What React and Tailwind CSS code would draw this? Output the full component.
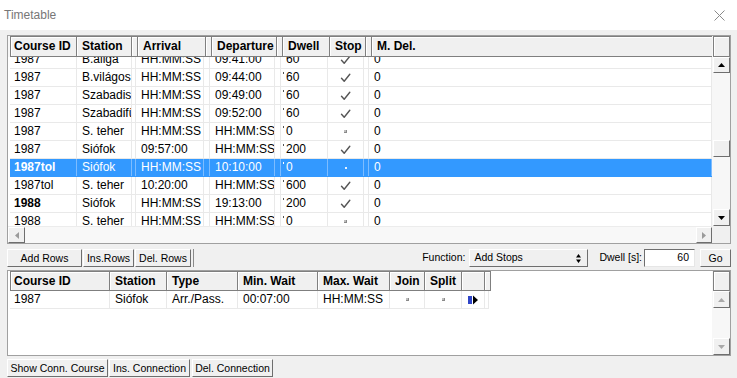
import React from 'react';

const topCols = [
  { w: 'w-[67px]', label: 'Course ID', first: true },
  { w: 'w-[55px]', label: 'Station' },
  { w: 'w-[4px]', hidden: true },
  { w: 'w-[68px]', label: 'Arrival' },
  { w: 'w-[6px]', hidden: true },
  { w: 'w-[65px]', label: 'Departure' },
  { w: 'w-[6px]', hidden: true },
  { w: 'w-[47px]', label: 'Dwell', tick: true },
  { w: 'w-[36px]', label: 'Stop', center: true },
  { w: 'w-[5px]', hidden: true },
  { w: 'w-[343px]', label: 'M. Del.' },
];

const topRows = [
  { v: ['1987', 'B.aliga', 'HH:MM:SS', '09:41:00', '60', 'check', '0'] },
  { v: ['1987', 'B.világos', 'HH:MM:SS', '09:44:00', '60', 'check', '0'] },
  { v: ['1987', 'Szabadisóstó', 'HH:MM:SS', '09:49:00', '60', 'check', '0'] },
  { v: ['1987', 'Szabadifürdő', 'HH:MM:SS', '09:52:00', '60', 'check', '0'] },
  { v: ['1987', 'S. teher', 'HH:MM:SS', 'HH:MM:SS', '0', 'box', '0'] },
  { v: ['1987', 'Siófok', '09:57:00', 'HH:MM:SS', '200', 'check', '0'] },
  { v: ['1987tol', 'Siófok', 'HH:MM:SS', '10:10:00', '0', 'dot', '0'], sel: true, bold: true },
  { v: ['1987tol', 'S. teher', '10:20:00', 'HH:MM:SS', '600', 'check', '0'] },
  { v: ['1988', 'Siófok', 'HH:MM:SS', '19:13:00', '200', 'check', '0'], bold: true },
  { v: ['1988', 'S. teher', 'HH:MM:SS', 'HH:MM:SS', '0', 'box', '0'] },
];

const botCols = [
  { w: 'w-[100px]', label: 'Course ID', first: true },
  { w: 'w-[57px]', label: 'Station' },
  { w: 'w-[71px]', label: 'Type' },
  { w: 'w-[80px]', label: 'Min. Wait' },
  { w: 'w-[72px]', label: 'Max. Wait' },
  { w: 'w-[35px]', label: 'Join', center: true },
  { w: 'w-[37px]', label: 'Split', center: true },
  { w: 'w-[23px]', label: '' },
  { w: 'w-[4px]', hidden: true },
];

const botRow = ['1987', 'Siófok', 'Arr./Pass.', '00:07:00', 'HH:MM:SS', 'box', 'box', 'arrow'];

function Check({ color = '#555' }) {
  return (
    <svg width="11" height="10" viewBox="0 0 11 10">
      <path d="M1.5 5.2 L4.2 8.3 L9.8 1.3" fill="none" stroke={color} strokeWidth="1.4" strokeLinecap="round" strokeLinejoin="round" />
    </svg>
  );
}

function Box() {
  return <span className="block w-[3px] h-[3px] bg-[#bdbdbd] border-r border-b border-[#8a8a8a]" />;
}

function Glyph({ kind, sel }) {
  if (kind === 'check') return <Check />;
  if (kind === 'box') return <Box />;
  if (kind === 'dot') return <span className="block w-[2px] h-[2px] bg-[#e8f2ff]" />;
  if (kind === 'arrow')
    return (
      <svg width="11" height="10" viewBox="0 0 11 10">
        <rect x="0" y="1" width="4" height="8" fill="#2f45c8" />
        <path d="M5 0.5 L10 5 L5 9.5 Z" fill="#000" />
      </svg>
    );
  return null;
}

function Tri({ dir, color }) {
  if (dir === 'up')
    return (
      <svg width="7" height="4" viewBox="0 0 7 4">
        <path d="M0 4 L3.5 0 L7 4 Z" fill={color} />
      </svg>
    );
  if (dir === 'down')
    return (
      <svg width="7" height="4" viewBox="0 0 7 4">
        <path d="M0 0 L3.5 4 L7 0 Z" fill={color} />
      </svg>
    );
  if (dir === 'left')
    return (
      <svg width="4" height="7" viewBox="0 0 4 7">
        <path d="M4 0 L0 3.5 L4 7 Z" fill={color} />
      </svg>
    );
  return (
    <svg width="4" height="7" viewBox="0 0 4 7">
      <path d="M0 0 L4 3.5 L0 7 Z" fill={color} />
    </svg>
  );
}

function SBtn({ dir, color = '#000', className = '' }) {
  return (
    <div
      className={`shrink-0 flex items-center justify-center bg-[#f0f0f0] border border-t-white border-l-white border-r-[#6e6e6e] border-b-[#6e6e6e] ${className}`}
    >
      {dir ? <Tri dir={dir} color={color} /> : null}
    </div>
  );
}

function TkButton({ className = '', children }) {
  return (
    <div
      className={`shrink-0 flex items-center justify-center h-[18px] bg-[#f0f0f0] border border-t-white border-l-white border-r-[#6e6e6e] border-b-[#6e6e6e] text-[10.5px] leading-none whitespace-nowrap ${className}`}
    >
      {children}
    </div>
  );
}

function HeaderCell({ col }) {
  return (
    <div
      className={`${col.w} shrink-0 h-full border-y border-r border-[#7f7f7f] bg-[#f0f0f0] shadow-[inset_1px_1px_0_#ffffff] font-bold leading-[19px] overflow-hidden whitespace-nowrap ${
        col.first ? 'border-l pl-[3px]' : 'pl-[5px]'
      }`}
    >
      {col.hidden ? null : col.label}
    </div>
  );
}

function TopTable() {
  return (
    <div className="h-[209px] flex border border-[#a0a0a0] bg-white shrink-0">
      <div className="flex-1 min-w-0 flex flex-col">
        <div className="h-[21px] flex pl-[2px] bg-[#f7f7f7] shrink-0">
          {topCols.map((c, i) => (
            <HeaderCell key={i} col={c} />
          ))}
        </div>
        <div className="h-[169px] overflow-hidden bg-white shrink-0">
          <div className="-mt-[6px]">
            {topRows.map((r, ri) => {
              let vi = 0;
              return (
                <div
                  key={ri}
                  className={`flex h-[18px] ml-[2px] border-b ${
                    r.sel ? 'bg-[#3399ff] text-white border-[#3399ff]' : 'border-[#e9e9e9]'
                  }`}
                >
                  {topCols.map((c, ci) => {
                    if (c.hidden)
                      return (
                        <div
                          key={ci}
                          className={`${c.w} shrink-0 border-r ${r.sel ? 'border-[#7dbcff]' : 'border-[#e9e9e9]'}`}
                        />
                      );
                    const val = r.v[vi++];
                    const isBold = c.first && r.bold;
                    if (c.center)
                      return (
                        <div
                          key={ci}
                          className={`${c.w} shrink-0 flex items-center justify-center border-r ${
                            r.sel ? 'border-[#7dbcff]' : 'border-[#e9e9e9]'
                          }`}
                        >
                          <Glyph kind={val} sel={r.sel} />
                        </div>
                      );
                    return (
                      <div
                        key={ci}
                        className={`${c.w} shrink-0 flex border-r leading-[17px] overflow-hidden whitespace-nowrap ${
                          r.sel ? 'border-[#7dbcff]' : 'border-[#e9e9e9]'
                        } ${c.first ? 'pl-[4px]' : c.tick ? 'pl-[2px]' : 'pl-[5px]'} ${isBold ? 'font-bold' : ''}`}
                      >
                        {c.tick ? (
                          <span className={`w-px h-[2px] mt-[3px] mr-[2px] shrink-0 ${r.sel ? 'bg-white' : 'bg-[#555]'}`} />
                        ) : null}
                        <span>{val}</span>
                      </div>
                    );
                  })}
                </div>
              );
            })}
          </div>
        </div>
        <div className="h-[17px] flex justify-between bg-[#f8f8f8] border-t border-[#ececec] shrink-0">
          <SBtn dir="left" color="#9a9a9a" className="w-[17px] h-[16px]" />
          <SBtn dir="right" color="#9a9a9a" className="w-[16px] h-[16px]" />
        </div>
      </div>
      <div className="w-[18px] shrink-0 flex flex-col bg-[#f7f7f7]">
        <div className="h-[21px] ml-[1px] shrink-0 border border-[#7f7f7f] bg-[#f0f0f0] shadow-[inset_1px_1px_0_#ffffff]" />
        <SBtn dir="up" className="ml-[1px] h-[16px]" />
        <div className="flex-1 flex flex-col">
          <SBtn className="ml-[1px] mt-[67px] h-[17px]" />
        </div>
        <SBtn dir="down" className="ml-[1px] h-[17px]" />
        <div className="h-[17px] shrink-0 bg-[#f0f0f0]" />
      </div>
    </div>
  );
}

function BottomTable() {
  let vi = 0;
  return (
    <div className="h-[86px] flex border border-[#a0a0a0] bg-white shrink-0">
      <div className="flex-1 min-w-0 flex flex-col">
        <div className="h-[20px] flex pl-[2px] bg-white shrink-0">
          {botCols.map((c, i) => (
            <HeaderCell key={i} col={c} />
          ))}
        </div>
        <div className="flex h-[18px] ml-[2px] border-b border-[#e9e9e9] self-start">
          {botCols.map((c, ci) => {
            if (c.hidden) return <div key={ci} className={`${c.w} shrink-0 border-r border-[#e9e9e9]`} />;
            const val = botRow[vi++];
            if (val === 'box' || val === 'arrow')
              return (
                <div
                  key={ci}
                  className={`${c.w} shrink-0 flex items-center border-r border-[#e9e9e9] ${
                    val === 'arrow' ? 'pl-[6px]' : 'justify-center'
                  }`}
                >
                  <Glyph kind={val} />
                </div>
              );
            return (
              <div
                key={ci}
                className={`${c.w} shrink-0 border-r border-[#e9e9e9] leading-[17px] overflow-hidden whitespace-nowrap ${
                  c.first ? 'pl-[4px]' : 'pl-[5px]'
                }`}
              >
                {val}
              </div>
            );
          })}
        </div>
      </div>
      <div className="w-[18px] shrink-0 flex flex-col bg-[#f7f7f7]">
        <div className="h-[20px] ml-[1px] shrink-0 border border-[#7f7f7f] bg-[#f0f0f0] shadow-[inset_1px_1px_0_#ffffff]" />
        <SBtn dir="up" color="#a8a8a8" className="ml-[1px] h-[17px]" />
        <div className="flex-1" />
        <SBtn dir="down" color="#a8a8a8" className="ml-[1px] h-[17px]" />
      </div>
    </div>
  );
}

export default function App() {
  return (
    <div className="w-[737px] h-[378px] overflow-hidden flex flex-col bg-[#f0f0f0] text-black text-[12px] font-['Liberation_Sans',Arial,sans-serif]">
      <div className="h-[30px] shrink-0 bg-white flex items-center justify-between pl-[4px] pr-[12px]">
        <span className="text-[12px] text-[#777777]">Timetable</span>
        <svg width="11" height="11" viewBox="0 0 11 11">
          <path d="M0.5 0.5 L10.5 10.5 M10.5 0.5 L0.5 10.5" stroke="#8a8a8a" strokeWidth="1" />
        </svg>
      </div>
      <div className="flex-1 flex flex-col pl-[7px] pr-[6px] pt-[5px]">
        <TopTable />
        <div className="mt-[5px] h-[18px] flex items-center text-[10.5px] shrink-0">
          <TkButton className="w-[75px]">Add Rows</TkButton>
          <TkButton className="w-[51px] ml-[1px]">Ins.Rows</TkButton>
          <TkButton className="w-[56px] ml-[1px]">Del. Rows</TkButton>
          <div className="ml-[2px] w-px h-[18px] bg-[#8a8a8a]" />
          <div className="ml-auto flex items-center">
            <span>Function:</span>
            <div className="ml-[4px] w-[119px] h-[18px] flex items-center justify-between pl-[4px] pr-[6px] bg-[#f0f0f0] border border-t-white border-l-white border-r-[#6e6e6e] border-b-[#6e6e6e]">
              <span>Add Stops</span>
              <svg width="5" height="9" viewBox="0 0 5 9">
                <path d="M0 3.5 L2.5 0 L5 3.5 Z M0 5.5 L2.5 9 L5 5.5 Z" fill="#000" />
              </svg>
            </div>
            <span className="ml-[11px]">Dwell [s]:</span>
            <div className="ml-[2px] w-[51px] h-[18px] flex items-center justify-end pr-[5px] bg-white border border-t-[#6e6e6e] border-l-[#6e6e6e] border-r-[#e6e6e6] border-b-[#e6e6e6]">
              60
            </div>
            <TkButton className="ml-[5px] w-[31px]">Go</TkButton>
          </div>
        </div>
        <div className="mt-[3px]">
          <BottomTable />
        </div>
        <div className="mt-[3px] flex shrink-0">
          <TkButton className="w-[101px]">Show Conn. Course</TkButton>
          <TkButton className="w-[81px] ml-[1px]">Ins. Connection</TkButton>
          <TkButton className="w-[81px] ml-[2px]">Del. Connection</TkButton>
        </div>
      </div>
    </div>
  );
}
